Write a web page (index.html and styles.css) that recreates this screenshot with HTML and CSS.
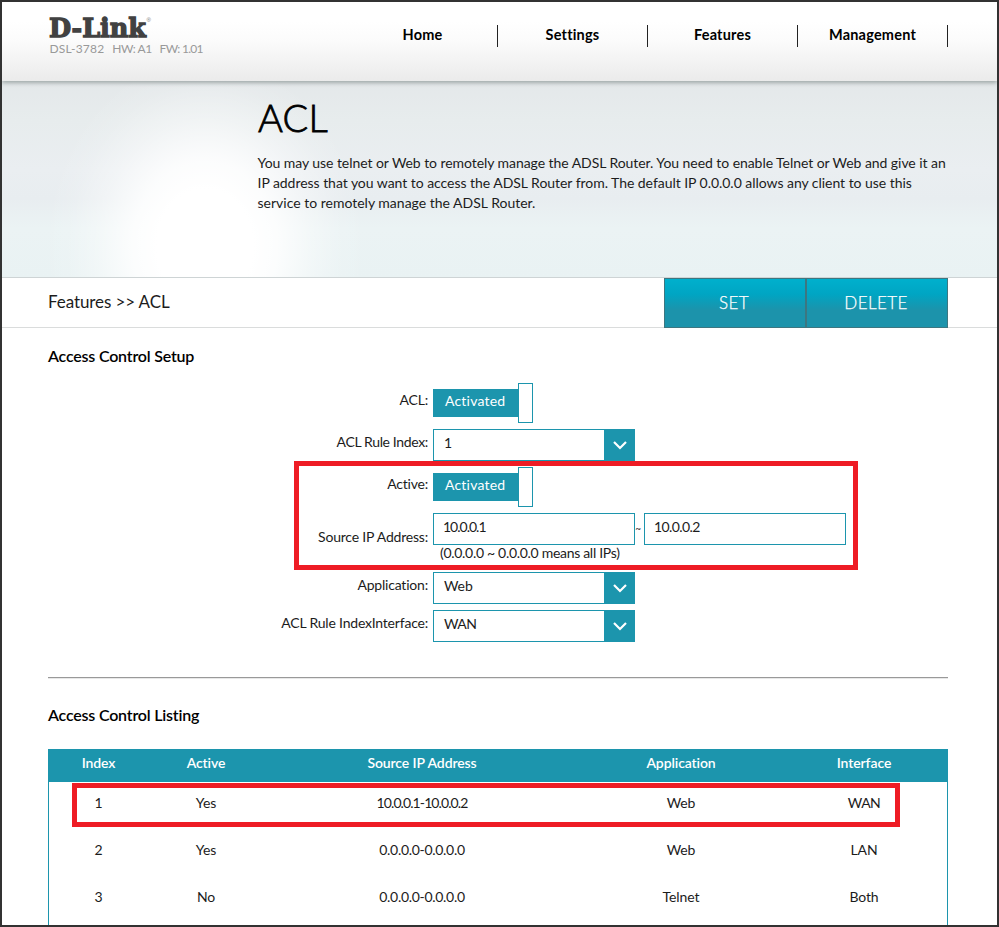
FILE: index.html
```html
<!DOCTYPE html>
<html lang="en">
<head>
<meta charset="utf-8">
<title>ACL</title>
<link rel="stylesheet" href="styles.css">
</head>
<body>
<div class="page">
  <header class="top">
    <div class="brand">
      <svg class="logo" width="112" height="32" viewBox="0 0 112 32" role="img">
        <text class="logo-word" x="1" y="26" textLength="97" lengthAdjust="spacingAndGlyphs">D-Link</text>
        <text class="logo-reg" x="98.5" y="11">®</text>
      </svg>
      <div class="versions"><span>DSL-3782</span><span class="hw">HW: A1</span><span class="fw">FW: 1.01</span></div>
    </div>
    <nav class="nav"><a>Home</a><a>Settings</a><a>Features</a><a>Management</a></nav>
  </header>
  <section class="hero">
    <h1>ACL</h1>
    <p>You may use telnet or Web to remotely manage the ADSL Router. You need to enable Telnet or Web and give it an<br><span class="middle">IP address that you want to access the ADSL Router from. The default IP 0.0.0.0 allows any client to use this</span><br><span class="last">service to remotely manage the ADSL Router.</span></p>
  </section>
  <div class="bar">
    <div class="crumb">Features &gt;&gt; ACL</div>
    <div class="actions"><button class="btn">SET</button><button class="btn">DELETE</button></div>
  </div>
  <main class="content">
    <h2>Access Control Setup</h2>
    <div class="form">
      <div class="row toggle-row"><label>ACL:</label><div class="toggle"><span>Activated</span><i></i></div></div>
      <div class="row index-row"><label class="tight">ACL Rule Index:</label><div class="select"><span>1</span><b><svg width="16" height="10" viewBox="0 0 16 10"><path d="M2 2l6 6 6-6"/></svg></b></div></div>
      <div class="group">
        <div class="row toggle-row"><label>Active:</label><div class="toggle"><span>Activated</span><i></i></div></div>
        <div class="row source-row">
          <label>Source IP Address:</label>
          <div>
            <div class="range"><div class="input first">10.0.0.1</div><span class="tilde">~</span><div class="input">10.0.0.2</div></div>
            <div class="hint">(0.0.0.0 ~ 0.0.0.0 means all IPs)</div>
          </div>
        </div>
        <div class="mark mark-form"></div>
      </div>
      <div class="row app-row"><label>Application:</label><div class="select"><span>Web</span><b><svg width="16" height="10" viewBox="0 0 16 10"><path d="M2 2l6 6 6-6"/></svg></b></div></div>
      <div class="row"><label>ACL Rule IndexInterface:</label><div class="select"><span class="caps">WAN</span><b><svg width="16" height="10" viewBox="0 0 16 10"><path d="M2 2l6 6 6-6"/></svg></b></div></div>
    </div>
    <div class="rule"></div>
    <h2 class="listing">Access Control Listing</h2>
    <div class="table">
      <div class="tr th"><span>Index</span><span>Active</span><span>Source IP Address</span><span>Application</span><span>Interface</span></div>
      <div class="tr"><span>1</span><span>Yes</span><span class="ip-narrow">10.0.0.1-10.0.0.2</span><span>Web</span><span class="caps">WAN</span><div class="mark mark-row"></div></div>
      <div class="tr"><span>2</span><span>Yes</span><span class="ip">0.0.0.0-0.0.0.0</span><span>Web</span><span>LAN</span></div>
      <div class="tr"><span>3</span><span>No</span><span class="ip">0.0.0.0-0.0.0.0</span><span>Telnet</span><span>Both</span></div>
    </div>
  </main>
</div>
</body>
</html>
```

FILE: styles.css
```css
* { box-sizing: border-box; }
body { margin: 0; }
.page {
  width: 999px; height: 927px; overflow: hidden;
  border: 2px solid #323232; background: #fff;
  font: 14px/20px Lato, "Open Sans", sans-serif; color: #1c1c1c;
  letter-spacing: -0.1px; white-space: nowrap;
}
.top {
  height: 79px; display: flex; justify-content: space-between;
  padding: 0 49px 0 46px; position: relative;
  background: linear-gradient(#fff 25%, #fbfbfb 50%, #ebebeb 100%);
  box-shadow: 0 2px 4px #9fa8a8;
}
.brand { padding-top: 9px; }
.logo { display: block; overflow: visible; }
.logo-word { font: bold 26px "DejaVu Serif", serif; fill: #414141; stroke: #414141; stroke-width: 1.3px; letter-spacing: 0; }
.logo-reg { font: 6px "Liberation Sans", sans-serif; fill: #777; letter-spacing: 0; }
.versions { display: flex; margin-top: -6px; padding-left: 1.5px; font-size: 12px; line-height: 23px; color: #999; letter-spacing: .2px; }
.versions .hw { margin-left: 8px; letter-spacing: -.5px; }
.versions .fw { margin-left: 8px; letter-spacing: -.7px; }
.nav { display: flex; padding-top: 23px; }
.nav a { width: 150px; height: 22px; line-height: 19px; text-align: center; border-right: 1px solid #222; font-weight: bold; font-size: 14.5px; color: #000; letter-spacing: .2px; }
.hero {
  height: 197px; padding: 12px 0 0 256px; border-bottom: 1px solid #ced4d5;
  background:
    radial-gradient(ellipse 160px 190px at 203px 165px, #fff 0 30%, rgba(255,255,255,.85) 45%, rgba(255,255,255,.4) 67%, rgba(255,255,255,.12) 85%, rgba(255,255,255,0) 100%),
    linear-gradient(#e4e8ea 0, #e7eced 20%, #eaeef1 45%, #e8edf0 60%, #ebf3f4 75%, #e9f2f3 100%);
}
.hero h1 { margin: 0; font-size: 38px; line-height: 48px; font-weight: 300; -webkit-text-stroke: .8px #000; letter-spacing: .3px; color: #000; }
.hero p { margin: 12px 0 0 -.5px; letter-spacing: -.06px; }
.hero .middle { letter-spacing: -.04px; }
.hero .last { letter-spacing: 0; }
.bar { height: 50px; display: flex; justify-content: space-between; padding: 0 49px 0 46px; border-bottom: 1px solid #dadcdc; }
.crumb { font-size: 17px; line-height: 47px; }
.actions { display: flex; height: 50px; }
.btn {
  width: 142px; height: 50px; padding: 0 2px 2px 0; border: 1px solid #3d7680;
  background: linear-gradient(#00b0cd 0, #00a5c3 32%, #1c93ab 65%, #1c93ab 100%);
  color: #fff; font: 300 17px Lato, sans-serif; letter-spacing: .4px; -webkit-text-stroke: .25px #fff;
}
.content { padding: 0 49px 0 46px; }
h2 { margin: 0; padding-top: 18px; font-size: 16px; line-height: 20px; font-weight: 600; letter-spacing: -0.2px; color: #000; }
.row { display: grid; grid-template-columns: 380px 1fr; column-gap: 5px; }
.row label { text-align: right; line-height: 26px; letter-spacing: -.2px; }
.row .tight { letter-spacing: -.35px; }
.form { padding-top: 17px; }
.toggle-row { height: 46px; }
.toggle { display: flex; }
.toggle span { width: 85px; height: 28px; margin-top: 6px; background: #1c95ad; color: #fff; padding-left: 12px; line-height: 24px; letter-spacing: .2px; }
.toggle i { width: 15px; height: 40px; border: 1px solid #1c95ad; background: #fff; }
.toggle-row label { line-height: 34px; }
.index-row { height: 38px; }
.select { display: flex; justify-content: space-between; width: 202px; height: 32px; border: 1px solid #1c95ad; background: #fff; line-height: 26px; padding-left: 10px; }
.select b { width: 30px; display: grid; place-items: center; padding: 0 0 0 2px; background: #1c95ad; }
.select path { fill: none; stroke: #fff; stroke-width: 2.2; }
.group { position: relative; }
.source-row { height: 59px; }
.source-row label { line-height: 48px; }
.range { display: flex; }
.input { width: 202px; height: 32px; border: 1px solid #1c95ad; padding-left: 9px; line-height: 26px; letter-spacing: -.6px; }
.input.first { letter-spacing: -1px; }
.tilde { width: 9px; padding-right: 3px; text-align: center; font-size: 10px; line-height: 30px; }
.hint { padding-left: 7px; line-height: 16px; letter-spacing: -.3px; }
.app-row { height: 38px; }
.mark { position: absolute; border: 5px solid #ee1c25; }
.mark-form { left: 246px; top: -6px; width: 564px; height: 109px; }
.rule { margin-top: 35px; height: 2px; border-top: 1px solid #999; border-bottom: 1px solid #e8e8e8; }
h2.listing { padding-top: 26px; }
.table { margin-top: 24px; border: 1px solid #1c95ad; border-top: 0; height: 240px; }
.tr { display: grid; grid-template-columns: 99px 116px 316px 202px 164px; height: 47px; line-height: 42px; text-align: center; position: relative; }
.th { height: 33px; line-height: 27px; background: #1c95ad; color: #fff; font-weight: 600; }
.tr .ip-narrow { letter-spacing: -.9px; }
.tr .ip { letter-spacing: -.3px; }
.caps { letter-spacing: -.6px; }
.mark-row { left: 23px; top: 1px; width: 828px; height: 44px; }
```
